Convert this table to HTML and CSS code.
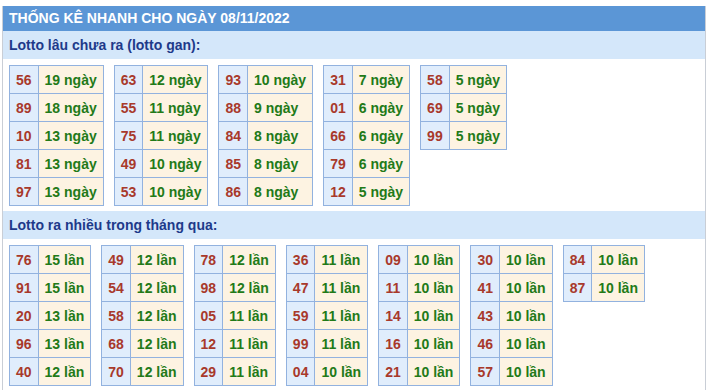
FILE: index.html
```html
<!DOCTYPE html>
<html lang="vi">
<head>
<meta charset="utf-8">
<link rel="stylesheet" href="styles.css">
</head>
<body>
<div class="top-gap"></div>
<div class="box">
  <div class="title">THỐNG KÊ NHANH CHO NGÀY 08/11/2022</div>
  <div class="sec">Lotto lâu chưa ra (lotto gan):</div>
  <div class="tables">
    <table><tr><td class="n">56</td><td class="v">19 ngày</td></tr><tr><td class="n">89</td><td class="v">18 ngày</td></tr><tr><td class="n">10</td><td class="v">13 ngày</td></tr><tr><td class="n">81</td><td class="v">13 ngày</td></tr><tr><td class="n">97</td><td class="v">13 ngày</td></tr></table>
    <table><tr><td class="n">63</td><td class="v">12 ngày</td></tr><tr><td class="n">55</td><td class="v">11 ngày</td></tr><tr><td class="n">75</td><td class="v">11 ngày</td></tr><tr><td class="n">49</td><td class="v">10 ngày</td></tr><tr><td class="n">53</td><td class="v">10 ngày</td></tr></table>
    <table><tr><td class="n">93</td><td class="v">10 ngày</td></tr><tr><td class="n">88</td><td class="v">9 ngày</td></tr><tr><td class="n">84</td><td class="v">8 ngày</td></tr><tr><td class="n">85</td><td class="v">8 ngày</td></tr><tr><td class="n">86</td><td class="v">8 ngày</td></tr></table>
    <table><tr><td class="n">31</td><td class="v">7 ngày</td></tr><tr><td class="n">01</td><td class="v">6 ngày</td></tr><tr><td class="n">66</td><td class="v">6 ngày</td></tr><tr><td class="n">79</td><td class="v">6 ngày</td></tr><tr><td class="n">12</td><td class="v">5 ngày</td></tr></table>
    <table><tr><td class="n">58</td><td class="v">5 ngày</td></tr><tr><td class="n">69</td><td class="v">5 ngày</td></tr><tr><td class="n">99</td><td class="v">5 ngày</td></tr></table>
  </div>
  <div class="sec">Lotto ra nhiều trong tháng qua:</div>
  <div class="tables">
    <table><tr><td class="n">76</td><td class="v">15 lần</td></tr><tr><td class="n">91</td><td class="v">15 lần</td></tr><tr><td class="n">20</td><td class="v">13 lần</td></tr><tr><td class="n">96</td><td class="v">13 lần</td></tr><tr><td class="n">40</td><td class="v">12 lần</td></tr></table>
    <table><tr><td class="n">49</td><td class="v">12 lần</td></tr><tr><td class="n">54</td><td class="v">12 lần</td></tr><tr><td class="n">58</td><td class="v">12 lần</td></tr><tr><td class="n">68</td><td class="v">12 lần</td></tr><tr><td class="n">70</td><td class="v">12 lần</td></tr></table>
    <table><tr><td class="n">78</td><td class="v">12 lần</td></tr><tr><td class="n">98</td><td class="v">12 lần</td></tr><tr><td class="n">05</td><td class="v">11 lần</td></tr><tr><td class="n">12</td><td class="v">11 lần</td></tr><tr><td class="n">29</td><td class="v">11 lần</td></tr></table>
    <table><tr><td class="n">36</td><td class="v">11 lần</td></tr><tr><td class="n">47</td><td class="v">11 lần</td></tr><tr><td class="n">59</td><td class="v">11 lần</td></tr><tr><td class="n">99</td><td class="v">11 lần</td></tr><tr><td class="n">04</td><td class="v">10 lần</td></tr></table>
    <table><tr><td class="n">09</td><td class="v">10 lần</td></tr><tr><td class="n">11</td><td class="v">10 lần</td></tr><tr><td class="n">14</td><td class="v">10 lần</td></tr><tr><td class="n">16</td><td class="v">10 lần</td></tr><tr><td class="n">21</td><td class="v">10 lần</td></tr></table>
    <table><tr><td class="n">30</td><td class="v">10 lần</td></tr><tr><td class="n">41</td><td class="v">10 lần</td></tr><tr><td class="n">43</td><td class="v">10 lần</td></tr><tr><td class="n">46</td><td class="v">10 lần</td></tr><tr><td class="n">57</td><td class="v">10 lần</td></tr></table>
    <table><tr><td class="n">84</td><td class="v">10 lần</td></tr><tr><td class="n">87</td><td class="v">10 lần</td></tr></table>
  </div>
</div>
</body>
</html>
```
FILE: styles.css
```css
html, body {
  margin: 0;
  padding: 0;
  background: #fff;
  font-family: "Liberation Sans", Arial, sans-serif;
}
.top-gap {
  height: 6px;
}
.box {
  margin-left: 2px;
  width: 702px;
  border-left: 1px solid #c9ced6;
  border-right: 1px solid #c9ced6;
  padding-bottom: 20px;
}
.title {
  height: 25px;
  line-height: 25px;
  background: #5b96d6;
  color: #fff;
  font-weight: bold;
  font-size: 14px;
  padding-left: 6px;
}
.sec {
  height: 28px;
  line-height: 28px;
  background: #d4e7fa;
  color: #1e3a8a;
  font-weight: bold;
  font-size: 14px;
  padding-left: 6px;
}
.tables {
  display: flex;
  flex-wrap: wrap;
  align-items: flex-start;
  gap: 10px;
  padding: 6px 6px 5px 6px;
}
table {
  border-collapse: collapse;
  font-size: 14px;
  font-weight: bold;
}
td {
  border: 1px solid #92b2df;
  height: 27px;
  padding: 0 6px;
  white-space: nowrap;
}
td.n {
  background: #e0edfc;
  color: #a8392b;
  text-align: center;
}
td.v {
  background: #fdf3e2;
  color: #227a18;
}
```
